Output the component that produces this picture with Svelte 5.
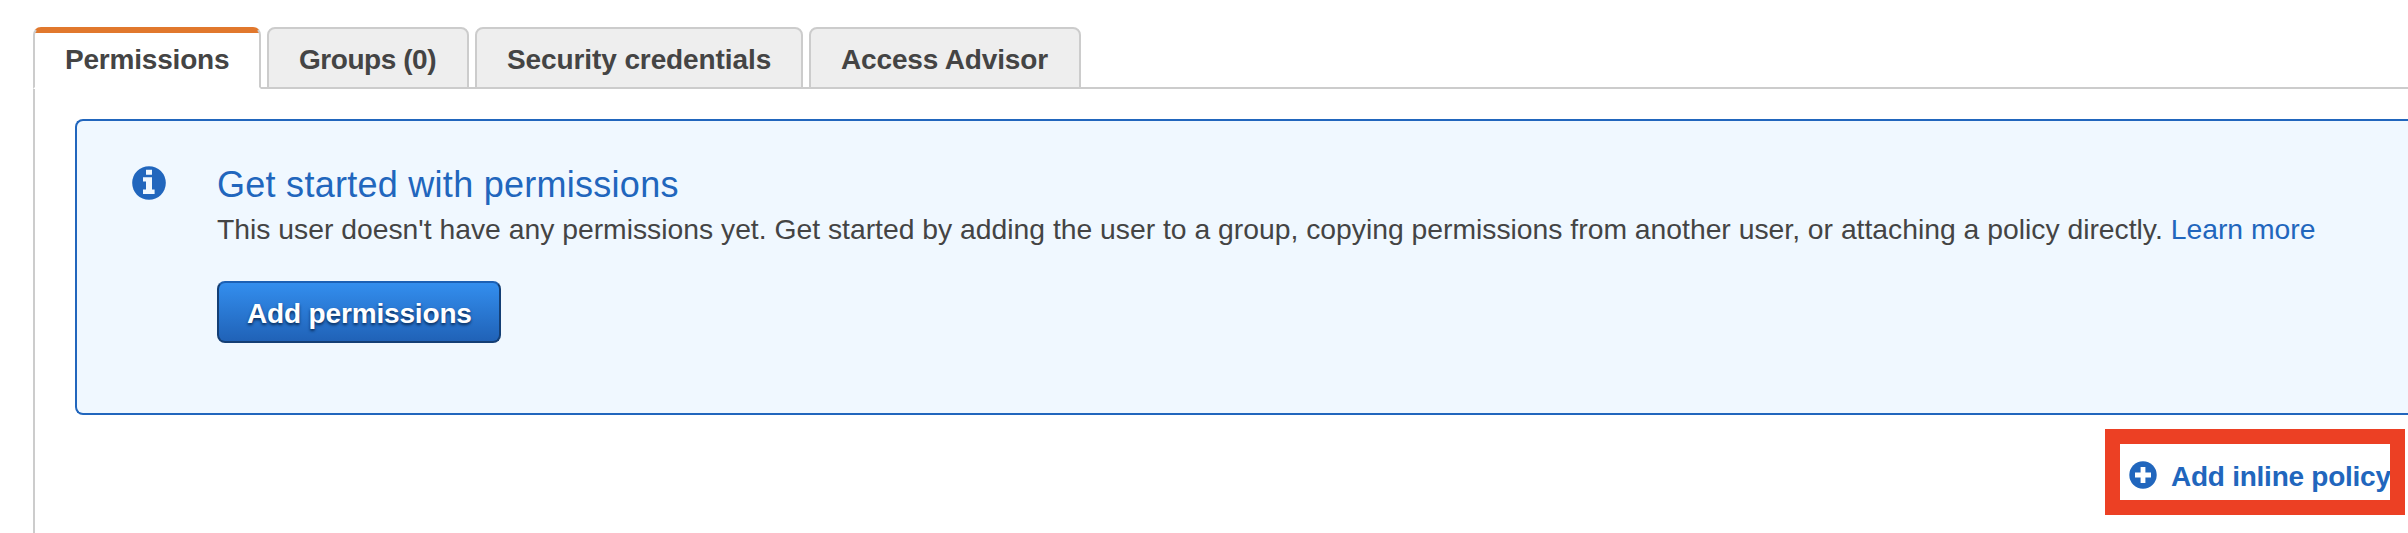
<script>
  const tabs = [
    { label: 'Permissions', key: 'permissions' },
    { label: 'Groups (0)', key: 'groups' },
    { label: 'Security credentials', key: 'credentials' },
    { label: 'Access Advisor', key: 'advisor' }
  ];
  let active = $state('permissions');
</script>

<main>
  <nav>
    {#each tabs as tab}
      <button class="tab {tab.key}" class:active={active === tab.key} onclick={() => (active = tab.key)}>{tab.label}</button>
    {/each}
  </nav>
  <section class="body">
    <div class="notice">
      <svg class="info" viewBox="0 0 34 34">
        <circle cx="17" cy="17" r="16.8" fill="#2166bd" />
        <path fill="#f0f8ff" d="M14 3.8h6v5h-6zM11 11.2h9v12.4h2.6V28H11v-4.4h3v-8h-3z" />
      </svg>
      <div class="content">
        <h2>Get started with permissions</h2>
        <p><span class="message">This user doesn't have any permissions yet. Get started by adding the user to a group, copying permissions from another user, or attaching a policy directly.</span> <a href="#learn">Learn more</a></p>
        <button class="primary">Add permissions</button>
      </div>
    </div>
    <div class="actions">
      <a class="inline-policy" href="#inline">
        <svg viewBox="0 0 28 28">
          <circle cx="14" cy="14" r="13.7" fill="#2166bd" />
          <path fill="#fff" d="M11.6 6h4.8v5.6H22v4.8h-5.6V22h-4.8v-5.6H6v-4.8h5.6z" />
        </svg>
        <span>Add inline policy</span>
      </a>
    </div>
  </section>
</main>

<style>
  :global(body) { margin: 0; background: #fff; overflow: hidden; }
  * { box-sizing: border-box; }
  main {
    height: 533px;
    padding: 27px 0 0 33px;
    display: flex;
    flex-direction: column;
    overflow: hidden;
    font: 28px/32px "Liberation Sans", Arial, sans-serif;
    color: #444;
  }
  button { font: inherit; margin: 0; }
  nav {
    display: flex;
    gap: 6px;
    height: 62px;
    flex: none;
    box-shadow: inset 0 -2px #ccc;
  }
  .tab {
    height: 62px;
    padding: 3px 0 0 30px;
    text-align: left;
    white-space: nowrap;
    font-weight: bold;
    color: #444;
    background: #eee;
    border: 2px solid #ccc;
    border-radius: 8px 8px 0 0;
  }
  .permissions { width: 228px; letter-spacing: -0.2px; }
  .groups { width: 202px; letter-spacing: -0.45px; }
  .credentials { width: 328px; letter-spacing: -0.1px; }
  .advisor { width: 272px; letter-spacing: -0.15px; }
  .tab.active {
    background: linear-gradient(#e1782d 6px, #fff 6px) border-box;
    border-top-color: transparent;
    border-bottom-color: #fff;
  }
  .body {
    flex: 1;
    padding: 30px 0 0 40px;
    border-left: 2px solid #ccc;
  }
  .notice {
    height: 296px;
    padding: 45px 0 0 55px;
    display: flex;
    gap: 51px;
    background: #f0f8ff;
    border: 2px solid #2166bd;
    border-right: none;
    border-radius: 8px 0 0 8px;
  }
  .info { width: 34px; height: 34px; flex: none; }
  .content { white-space: nowrap; }
  h2 {
    margin: -1px 0 0;
    font-size: 36px;
    line-height: 40px;
    font-weight: normal;
    letter-spacing: 0.27px;
    color: #2166bd;
  }
  p { margin: 8px 0 0; font-size: 28.3px; }
  a { color: #2166bd; text-decoration: none; }
  .primary {
    display: block;
    width: 284px;
    height: 62px;
    margin-top: 36px;
    padding: 3px 0 0 28px;
    text-align: left;
    font-weight: bold;
    letter-spacing: -0.16px;
    color: #fff;
    text-shadow: 0 2px 3px #082b58;
    background: linear-gradient(#338eee, #2062b7);
    border: 2px solid #143f75;
    border-top-color: #1c60b4;
    border-radius: 8px;
  }
  .actions {
    display: flex;
    justify-content: flex-end;
    padding: 14px 3px 0 0;
  }
  .inline-policy {
    width: 300px;
    height: 86px;
    padding: 2px 0 0 9px;
    display: flex;
    align-items: center;
    gap: 14px;
    overflow: hidden;
    white-space: nowrap;
    font-weight: bold;
    letter-spacing: -0.25px;
    border: 15px solid #ec4024;
  }
  .inline-policy svg { width: 28px; height: 28px; flex: none; margin-top: 4px; }
  .inline-policy span { margin-top: 8px; }
</style>
